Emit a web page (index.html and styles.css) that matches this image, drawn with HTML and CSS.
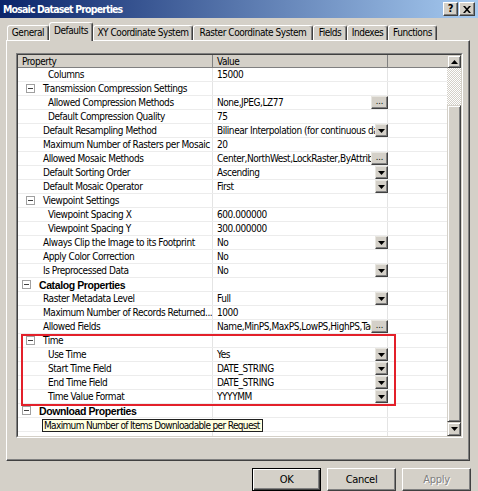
FILE: index.html
```html
<!DOCTYPE html>
<html>
<head>
<meta charset="utf-8">
<link rel="stylesheet" href="styles.css">
</head>
<body>
<div class="window">
  <div class="titlebar">
    <span class="title">Mosaic Dataset Properties</span>
    <div class="tb-btns">
      <span class="tbtn help">?</span>
      <span class="tbtn close"><svg width="8" height="7" viewBox="0 0 8 7"><path d="M0 0h2l2 2.2L6 0h2L5 3.5L8 7H6L4 4.8L2 7H0l3-3.5z" fill="#000"/></svg></span>
    </div>
  </div>
  <div class="tabs">
    <div class="tab w-general">General</div>
    <div class="tab sel w-defaults">Defaults</div>
    <div class="tab w-xy">XY Coordinate System</div>
    <div class="tab w-raster">Raster Coordinate System</div>
    <div class="tab w-fields">Fields</div>
    <div class="tab w-indexes">Indexes</div>
    <div class="tab w-functions">Functions</div>
  </div>
  <div class="panel">
    <div class="grid-outer">
      <div class="grid-inner">
        <div class="main">
          <div class="hdr">
            <div class="hc h1">Property</div>
            <div class="hc h2">Value</div>
            <div class="hc h3"></div>
          </div>
          <div class="rows">
            <div class="row"><div class="c1 sub">Columns</div><div class="c2"><span class="v">15000</span></div><div class="c3"></div></div>
            <div class="row"><div class="c1 grp"><span class="box"></span>Transmission Compression Settings</div><div class="c2"></div><div class="c3"></div></div>
            <div class="row"><div class="c1 sub">Allowed Compression Methods</div><div class="c2"><span class="v">None,JPEG,LZ77</span><span class="ell">...</span></div><div class="c3"></div></div>
            <div class="row"><div class="c1 sub">Default Compression Quality</div><div class="c2"><span class="v">75</span></div><div class="c3"></div></div>
            <div class="row"><div class="c1 top">Default Resampling Method</div><div class="c2"><span class="v">Bilinear Interpolation (for continuous data)</span><span class="dd"><svg width="7" height="4" viewBox="0 0 7 4"><path d="M0 0h7L3.5 4z" fill="#000"/></svg></span></div><div class="c3"></div></div>
            <div class="row"><div class="c1 top">Maximum Number of Rasters per Mosaic</div><div class="c2"><span class="v">20</span></div><div class="c3"></div></div>
            <div class="row"><div class="c1 top">Allowed Mosaic Methods</div><div class="c2"><span class="v">Center,NorthWest,LockRaster,ByAttribute,Nadir,Viewpoint,Seamline,None</span><span class="ell">...</span></div><div class="c3"></div></div>
            <div class="row"><div class="c1 top">Default Sorting Order</div><div class="c2"><span class="v">Ascending</span><span class="dd"><svg width="7" height="4" viewBox="0 0 7 4"><path d="M0 0h7L3.5 4z" fill="#000"/></svg></span></div><div class="c3"></div></div>
            <div class="row"><div class="c1 top">Default Mosaic Operator</div><div class="c2"><span class="v">First</span><span class="dd"><svg width="7" height="4" viewBox="0 0 7 4"><path d="M0 0h7L3.5 4z" fill="#000"/></svg></span></div><div class="c3"></div></div>
            <div class="row"><div class="c1 grp"><span class="box"></span>Viewpoint Settings</div><div class="c2"></div><div class="c3"></div></div>
            <div class="row"><div class="c1 sub">Viewpoint Spacing X</div><div class="c2"><span class="v">600.000000</span></div><div class="c3"></div></div>
            <div class="row"><div class="c1 sub">Viewpoint Spacing Y</div><div class="c2"><span class="v">300.000000</span></div><div class="c3"></div></div>
            <div class="row"><div class="c1 top">Always Clip the Image to its Footprint</div><div class="c2"><span class="v">No</span><span class="dd"><svg width="7" height="4" viewBox="0 0 7 4"><path d="M0 0h7L3.5 4z" fill="#000"/></svg></span></div><div class="c3"></div></div>
            <div class="row"><div class="c1 top">Apply Color Correction</div><div class="c2"><span class="v">No</span></div><div class="c3"></div></div>
            <div class="row"><div class="c1 top">Is Preprocessed Data</div><div class="c2"><span class="v">No</span><span class="dd"><svg width="7" height="4" viewBox="0 0 7 4"><path d="M0 0h7L3.5 4z" fill="#000"/></svg></span></div><div class="c3"></div></div>
            <div class="row"><div class="c1 cat"><span class="box"></span>Catalog Properties</div><div class="c2"></div><div class="c3"></div></div>
            <div class="row"><div class="c1 top">Raster Metadata Level</div><div class="c2"><span class="v">Full</span><span class="dd"><svg width="7" height="4" viewBox="0 0 7 4"><path d="M0 0h7L3.5 4z" fill="#000"/></svg></span></div><div class="c3"></div></div>
            <div class="row"><div class="c1 top">Maximum Number of Records Returned...</div><div class="c2"><span class="v">1000</span></div><div class="c3"></div></div>
            <div class="row"><div class="c1 top">Allowed Fields</div><div class="c2"><span class="v">Name,MinPS,MaxPS,LowPS,HighPS,Tag,GroupName,ProductName</span><span class="ell">...</span></div><div class="c3"></div></div>
            <div class="row"><div class="c1 grp"><span class="box"></span>Time</div><div class="c2"></div><div class="c3"></div></div>
            <div class="row"><div class="c1 sub">Use Time</div><div class="c2"><span class="v">Yes</span><span class="dd"><svg width="7" height="4" viewBox="0 0 7 4"><path d="M0 0h7L3.5 4z" fill="#000"/></svg></span></div><div class="c3"></div></div>
            <div class="row"><div class="c1 sub">Start Time Field</div><div class="c2"><span class="v">DATE_STRING</span><span class="dd"><svg width="7" height="4" viewBox="0 0 7 4"><path d="M0 0h7L3.5 4z" fill="#000"/></svg></span></div><div class="c3"></div></div>
            <div class="row"><div class="c1 sub">End Time Field</div><div class="c2"><span class="v">DATE_STRING</span><span class="dd"><svg width="7" height="4" viewBox="0 0 7 4"><path d="M0 0h7L3.5 4z" fill="#000"/></svg></span></div><div class="c3"></div></div>
            <div class="row"><div class="c1 sub">Time Value Format</div><div class="c2"><span class="v">YYYYMM</span><span class="dd"><svg width="7" height="4" viewBox="0 0 7 4"><path d="M0 0h7L3.5 4z" fill="#000"/></svg></span></div><div class="c3"></div></div>
            <div class="row"><div class="c1 cat"><span class="box"></span>Download Properties</div><div class="c2"></div><div class="c3"></div></div>
            <div class="row"><div class="c1 top"></div><div class="c2"></div><div class="c3"></div></div>
            <div class="row"><div class="c1 top"></div><div class="c2"></div><div class="c3"></div></div>
            <div class="redbox"></div>
            <div class="tooltip">Maximum Number of Items Downloadable per Request</div>
          </div>
        </div>
        <div class="vscroll">
          <div class="sbtn"><svg width="7" height="4" viewBox="0 0 7 4"><path d="M0 4h7L3.5 0z" fill="#000"/></svg></div>
          <div class="track"></div>
          <div class="thumb"></div>
          <div class="sbtn down"><svg width="7" height="4" viewBox="0 0 7 4"><path d="M0 0h7L3.5 4z" fill="#000"/></svg></div>
        </div>
      </div>
    </div>
  </div>
  <div class="buttons">
    <div class="btn default"><span class="btn-in">OK</span></div>
    <div class="btn"><span class="btn-in">Cancel</span></div>
    <div class="btn disabled"><span class="btn-in">Apply</span></div>
  </div>
</div>
</body>
</html>
```
FILE: styles.css
```css
html, body {
  margin: 0;
  padding: 0;
}
body {
  background: #d4d0c8;
  font-family: "DejaVu Sans Condensed", "DejaVu Sans", sans-serif;
  font-size: 10px;
  letter-spacing: -0.45px;
  color: #000;
}
.window {
  width: 478px;
  height: 491px;
  overflow: hidden;
  background: #d4d0c8;
}
.titlebar {
  height: 18px;
  display: flex;
  align-items: center;
  justify-content: space-between;
  background: linear-gradient(to right, #0a246a, #a6caf0);
  padding-left: 3px;
}
.title {
  color: #fff;
  font-weight: bold;
  font-size: 10.5px;
  letter-spacing: -0.85px;
  line-height: 17px;
}
.tb-btns {
  display: flex;
  gap: 1px;
  padding-right: 3px;
}
.tbtn {
  width: 16px;
  height: 14px;
  box-sizing: border-box;
  background: #d4d0c8;
  border: 1px solid;
  border-color: #fff #404040 #404040 #fff;
  box-shadow: inset -1px -1px #808080;
  display: flex;
  align-items: center;
  justify-content: center;
  font-weight: bold;
  font-size: 11px;
  letter-spacing: 0;
  line-height: 12px;
}
.tbtn.help { width: 15px; }
.tabs {
  height: 22px;
  display: flex;
  align-items: flex-end;
  padding-left: 7px;
  position: relative;
  z-index: 2;
}
.tab {
  height: 15px;
  box-sizing: border-box;
  border: 1px solid;
  border-bottom: none;
  border-color: #fff #404040 transparent #fff;
  box-shadow: inset -1px 0 #808080;
  border-radius: 3px 3px 0 0;
  text-align: center;
  line-height: 14px;
  white-space: nowrap;
  background: #d4d0c8;
}
.tab.sel {
  height: 19px;
  margin-bottom: -1px;
  line-height: 16px;
}
.w-general { width: 42px; }
.w-defaults { width: 44px; }
.w-xy { width: 100px; }
.w-raster { width: 120px; }
.w-fields { width: 34px; }
.w-indexes { width: 41px; }
.w-functions { width: 49px; }
.panel {
  margin-left: 6px;
  width: 464px;
  height: 421px;
  box-sizing: border-box;
  border: 1px solid;
  border-color: #fff #404040 #404040 #fff;
  box-shadow: inset -1px -1px #808080;
  padding: 12px 0 0 9px;
  position: relative;
  z-index: 1;
}
.grid-outer {
  width: 447px;
  height: 385px;
  box-sizing: border-box;
  border: 1px solid;
  border-color: #808080 #fff #fff #808080;
}
.grid-inner {
  height: 100%;
  box-sizing: border-box;
  border: 1px solid;
  border-color: #404040 #d4d0c8 #d4d0c8 #404040;
  display: flex;
  background: #fff;
}
.main {
  width: 429px;
  display: flex;
  flex-direction: column;
}
.hdr {
  height: 13px;
  display: flex;
  background: #d4d0c8;
  box-sizing: border-box;
  border-bottom: 1px solid #808080;
}
.hc {
  box-sizing: border-box;
  line-height: 13px;
  padding-left: 4px;
  border-right: 1px solid #808080;
}
.h1 { width: 195px; }
.h2 { width: 175px; }
.h3 { width: 59px; border-right: none; }
.rows {
  position: relative;
  flex: 1;
  overflow: hidden;
}
.row {
  height: 14px;
  box-sizing: border-box;
  border-bottom: 1px solid #ececec;
  display: flex;
}
.c1 {
  width: 195px;
  box-sizing: border-box;
  border-right: 1px solid #e4e4e4;
  line-height: 14px;
  white-space: nowrap;
  overflow: hidden;
  display: flex;
  align-items: center;
}
.c1.sub { padding-left: 30px; }
.c1.top { padding-left: 25px; }
.c1.grp { padding-left: 8px; }
.c1.cat {
  padding-left: 4px;
  font-family: "Liberation Sans", Arial, sans-serif;
  font-weight: bold;
  font-size: 10.5px;
  letter-spacing: -0.4px;
}
.box {
  width: 9px;
  height: 9px;
  box-sizing: border-box;
  border: 1px solid #a0a0a0;
  margin-right: 8px;
  flex: none;
  position: relative;
  background: #fff;
}
.box::after {
  content: "";
  position: absolute;
  left: 1px;
  top: 3px;
  width: 5px;
  height: 1px;
  background: #404040;
}
.c2 {
  width: 174px;
  display: flex;
  align-items: flex-start;
}
.v {
  flex: 1;
  min-width: 0;
  overflow: hidden;
  white-space: nowrap;
  padding-left: 4px;
  line-height: 14px;
}
.c3 {
  width: 60px;
  box-sizing: border-box;
  border-left: 1px solid #e4e4e4;
}
.dd, .ell {
  flex: none;
  height: 13px;
  box-sizing: border-box;
  background: #d4d0c8;
  border: 1px solid;
  border-color: #e8e6e0 #404040 #404040 #e8e6e0;
  box-shadow: inset -1px -1px #808080;
  display: flex;
  align-items: center;
  justify-content: center;
  margin-right: -1px;
  position: relative;
  z-index: 1;
}
.dd { width: 13px; }
.ell {
  width: 17px;
  font-size: 9px;
  letter-spacing: 0;
  line-height: 9px;
  align-items: flex-end;
  padding-bottom: 2px;
}
.redbox {
  position: absolute;
  left: 3px;
  top: 266px;
  width: 375px;
  height: 72px;
  box-sizing: border-box;
  border: 2px solid #e3202a;
  pointer-events: none;
  z-index: 3;
}
.tooltip {
  position: absolute;
  left: 24px;
  top: 351px;
  height: 13px;
  box-sizing: border-box;
  background: #ffffe1;
  border: 1px solid #202020;
  padding: 0 2px 0 1px;
  line-height: 11px;
  letter-spacing: -0.65px;
  white-space: nowrap;
  z-index: 4;
}
.vscroll {
  width: 14px;
  display: flex;
  flex-direction: column;
}
.sbtn {
  height: 13px;
  box-sizing: border-box;
  background: #d4d0c8;
  border: 1px solid;
  border-color: #d4d0c8 #404040 #404040 #d4d0c8;
  box-shadow: inset 1px 1px #fff, inset -1px -1px #808080;
  display: flex;
  align-items: center;
  justify-content: center;
}
.sbtn.down { height: 14px; }
.track {
  height: 37px;
  background: repeating-conic-gradient(#fff 0 25%, #d4d0c8 0 50%) 0 0 / 2px 2px;
}
.thumb {
  height: 317px;
  box-sizing: border-box;
  background: #d4d0c8;
  border: 1px solid;
  border-color: #d4d0c8 #404040 #404040 #d4d0c8;
  box-shadow: inset 1px 1px #fff, inset -1px -1px #808080;
}
.buttons {
  margin-top: 7px;
  display: flex;
  justify-content: flex-end;
  gap: 6px;
  padding-right: 7px;
}
.btn {
  width: 69px;
  height: 23px;
  box-sizing: border-box;
  border: 1px solid;
  border-color: #fff #404040 #404040 #fff;
  box-shadow: inset -1px -1px #808080;
  display: flex;
  align-items: center;
  justify-content: center;
  font-size: 11px;
  letter-spacing: -0.3px;
}
.btn.default {
  border: 1px solid #000;
  box-shadow: inset 1px 1px #fff, inset -1px -1px #404040, inset -2px -2px #808080;
}
.btn.disabled {
  color: #808080;
  text-shadow: 1px 1px #fff;
}
.btn-in {
  line-height: 13px;
}
```
